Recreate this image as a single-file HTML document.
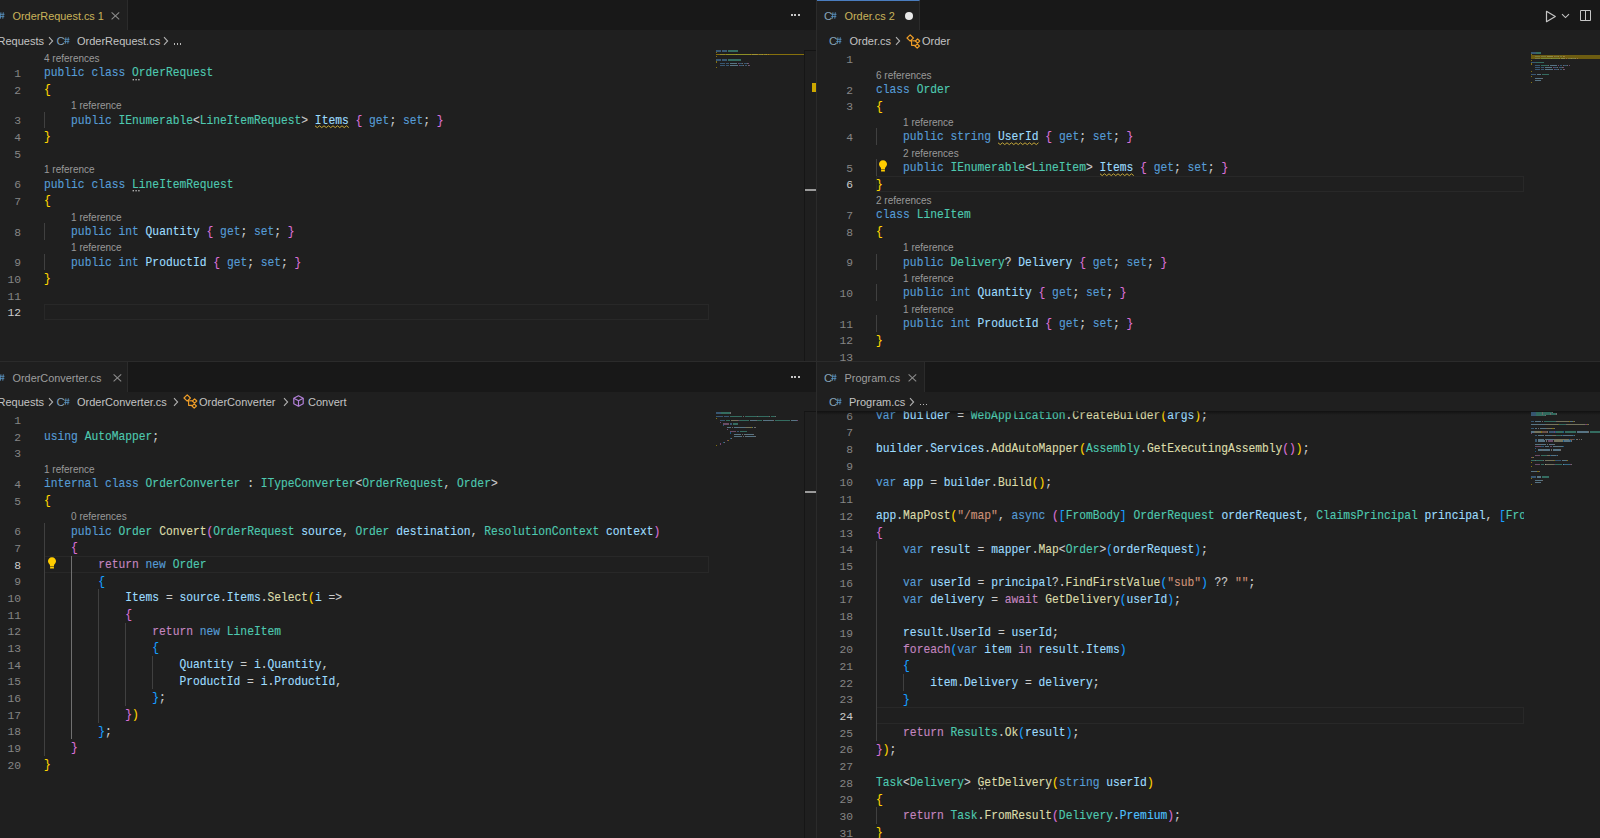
<!DOCTYPE html><html><head><meta charset="utf-8"><style>
*{margin:0;padding:0;box-sizing:border-box}
html,body{width:1600px;height:838px;overflow:hidden;background:#1f1f1f}
body{position:relative;font-family:"Liberation Sans",sans-serif}
.abs{position:absolute}
.lens{position:absolute;height:14px;line-height:14px;font-size:10px;color:#999999;white-space:pre;padding-top:1.6px}
.code{position:absolute;height:16.68px;line-height:16.68px;font-size:11.29px;white-space:pre;font-family:"Liberation Mono",monospace;color:#CCCCCC;padding-top:0.9px;transform:scaleY(1.07);transform-origin:0 12.2px;-webkit-text-stroke:0.12px}
.ln{position:absolute;width:40px;text-align:right;height:16.68px;line-height:16.68px;font-size:11.29px;font-family:"Liberation Mono",monospace;padding-top:1.7px}
.cur{position:absolute;height:16.68px;border:1px solid #282828}
.ig{position:absolute;width:1px;height:16.68px;background:#404040}
.ig.act{background:#707070}
.mm{position:absolute;height:1.2px;opacity:0.45}
.tabtxt{position:absolute;height:30px;line-height:30px;font-size:10.9px;white-space:pre}
.bct{position:absolute;height:20px;line-height:20px;white-space:pre}
.csic{position:absolute;font-size:11.5px;line-height:14px;height:14px;color:#86A2B8;white-space:pre}
.hash{font-size:8px;position:relative;top:-1px}
</style></head><body>
<div class="abs" style="left:0px;top:0px;width:816px;height:30px;background:#181818;"></div>
<div class="abs" style="left:0px;top:0px;width:128px;height:30px;background:#1f1f1f;border-right:1px solid #2b2b2b"></div>
<div class="csic" style="left:-7.9px;top:8.5px">C</div><svg class="abs" style="left:-0.9px;top:11.9px" width="6" height="7" viewBox="0 0 6 7"><path d="M1.9 0.3L1.4 6.7M4.3 0.3L3.8 6.7M0.3 2.3H5.5M0.1 4.6H5.3" stroke="#5A93C2" stroke-width="0.85"/></svg>
<div class="tabtxt" style="left:12.5px;top:0.7px;color:#C9B35A">OrderRequest.cs 1</div>
<svg class="abs" style="left:110.5px;top:12px" width="9" height="8" viewBox="0 0 9 8"><path d="M0.6 0.4L8.2 7.4M8.2 0.4L0.6 7.4" stroke="#8C8C8C" stroke-width="1.05"/></svg>
<div class="abs" style="left:0px;top:30px;width:816px;height:20px;background:#1f1f1f"></div>
<div class="bct" style="left:-2.5px;top:31px;color:#C3C3C3;font-size:11px">Requests</div><svg class="abs" style="left:47.5px;top:36px" width="6" height="10" viewBox="0 0 6 10"><path d="M1 1.2L4.6 5L1 8.8" fill="none" stroke="#B0B0B0" stroke-width="1.1"/></svg><div class="csic" style="left:56.6px;top:34px">C</div><svg class="abs" style="left:63.6px;top:37.4px" width="6" height="7" viewBox="0 0 6 7"><path d="M1.9 0.3L1.4 6.7M4.3 0.3L3.8 6.7M0.3 2.3H5.5M0.1 4.6H5.3" stroke="#5A93C2" stroke-width="0.85"/></svg><div class="bct" style="left:77px;top:31px;color:#C3C3C3;font-size:11px">OrderRequest.cs</div><svg class="abs" style="left:163px;top:36px" width="6" height="10" viewBox="0 0 6 10"><path d="M1 1.2L4.6 5L1 8.8" fill="none" stroke="#B0B0B0" stroke-width="1.1"/></svg><div class="abs" style="left:173.5px;top:43px;width:1.5px;height:1.5px;background:#B8B8B8"></div><div class="abs" style="left:176.5px;top:43px;width:1.5px;height:1.5px;background:#B8B8B8"></div><div class="abs" style="left:179.5px;top:43px;width:1.5px;height:1.5px;background:#B8B8B8"></div>
<div class="abs" style="left:790.5px;top:14.3px;width:2px;height:2px;background:#C5C5C5"></div><div class="abs" style="left:794.1px;top:14.3px;width:2px;height:2px;background:#C5C5C5"></div><div class="abs" style="left:797.7px;top:14.3px;width:2px;height:2px;background:#C5C5C5"></div>
<div style="position:absolute;left:0px;top:50.3px;width:816px;height:310.7px;overflow:hidden">
<div class="cur" style="left:44px;top:253.48px;width:665px"></div>
<div class="ig" style="left:44px;top:61.36px"></div>
<div class="ig" style="left:44px;top:172.76px"></div>
<div class="ig" style="left:44px;top:203.44px"></div>
<div class="lens" style="left:44px;top:-0px">4 references</div><div class="lens" style="left:71.09px;top:47.36px">1 reference</div><div class="lens" style="left:44px;top:111.4px">1 reference</div><div class="lens" style="left:71.09px;top:158.76px">1 reference</div><div class="lens" style="left:71.09px;top:189.44px">1 reference</div>
<div class="ln" style="left:-19px;top:14px;color:#858585">1</div>
<div class="code" style="left:44px;top:14px"><span style="color:#569CD6">public</span> <span style="color:#569CD6">class</span> <span style="color:#4EC9B0">OrderRequest</span></div>
<div class="ln" style="left:-19px;top:30.68px;color:#858585">2</div>
<div class="code" style="left:44px;top:30.68px"><span style="color:#FFD700">{</span></div>
<div class="ln" style="left:-19px;top:61.36px;color:#858585">3</div>
<div class="code" style="left:44px;top:61.36px">    <span style="color:#569CD6">public</span> <span style="color:#4EC9B0">IEnumerable</span>&lt;<span style="color:#4EC9B0">LineItemRequest</span>&gt; <span style="color:#9CDCFE">Items</span> <span style="color:#DA70D6">{</span> <span style="color:#569CD6">get</span>; <span style="color:#569CD6">set</span>; <span style="color:#DA70D6">}</span></div>
<div class="ln" style="left:-19px;top:78.04px;color:#858585">4</div>
<div class="code" style="left:44px;top:78.04px"><span style="color:#FFD700">}</span></div>
<div class="ln" style="left:-19px;top:94.72px;color:#858585">5</div>
<div class="code" style="left:44px;top:94.72px"></div>
<div class="ln" style="left:-19px;top:125.4px;color:#858585">6</div>
<div class="code" style="left:44px;top:125.4px"><span style="color:#569CD6">public</span> <span style="color:#569CD6">class</span> <span style="color:#4EC9B0">LineItemRequest</span></div>
<div class="ln" style="left:-19px;top:142.08px;color:#858585">7</div>
<div class="code" style="left:44px;top:142.08px"><span style="color:#FFD700">{</span></div>
<div class="ln" style="left:-19px;top:172.76px;color:#858585">8</div>
<div class="code" style="left:44px;top:172.76px">    <span style="color:#569CD6">public</span> <span style="color:#569CD6">int</span> <span style="color:#9CDCFE">Quantity</span> <span style="color:#DA70D6">{</span> <span style="color:#569CD6">get</span>; <span style="color:#569CD6">set</span>; <span style="color:#DA70D6">}</span></div>
<div class="ln" style="left:-19px;top:203.44px;color:#858585">9</div>
<div class="code" style="left:44px;top:203.44px">    <span style="color:#569CD6">public</span> <span style="color:#569CD6">int</span> <span style="color:#9CDCFE">ProductId</span> <span style="color:#DA70D6">{</span> <span style="color:#569CD6">get</span>; <span style="color:#569CD6">set</span>; <span style="color:#DA70D6">}</span></div>
<div class="ln" style="left:-19px;top:220.12px;color:#858585">10</div>
<div class="code" style="left:44px;top:220.12px"><span style="color:#FFD700">}</span></div>
<div class="ln" style="left:-19px;top:236.8px;color:#858585">11</div>
<div class="code" style="left:44px;top:236.8px"></div>
<div class="ln" style="left:-19px;top:253.48px;color:#CCCCCC">12</div>
<div class="code" style="left:44px;top:253.48px"></div>
<svg class="abs" style="left:314.92px;top:74.96px" width="34.86" height="4"><polyline points="0,0.8 2.25,2.6 4.5,0.8 6.75,2.6 9,0.8 11.25,2.6 13.5,0.8 15.75,2.6 18,0.8 20.25,2.6 22.5,0.8 24.75,2.6 27,0.8 29.25,2.6 31.5,0.8 33.75,2.6" fill="none" stroke="#C4A73A" stroke-width="1"/></svg>
<svg class="abs" style="left:132.05px;top:28.4px" width="9" height="2"><rect x="0.6" y="0" width="1.4" height="1.4" fill="#B0B0B0"/><rect x="3.4" y="0" width="1.4" height="1.4" fill="#B0B0B0"/><rect x="6.2" y="0" width="1.4" height="1.4" fill="#B0B0B0"/></svg>
<svg class="abs" style="left:132.05px;top:139.8px" width="9" height="2"><rect x="0.6" y="0" width="1.4" height="1.4" fill="#B0B0B0"/><rect x="3.4" y="0" width="1.4" height="1.4" fill="#B0B0B0"/><rect x="6.2" y="0" width="1.4" height="1.4" fill="#B0B0B0"/></svg>
<div class="mm" style="left:716px;top:0.1px;width:5.4px;background:#569CD6"></div>
<div class="mm" style="left:722.3px;top:0.1px;width:4.5px;background:#569CD6"></div>
<div class="mm" style="left:727.7px;top:0.1px;width:10.8px;background:#4EC9B0"></div>
<div class="mm" style="left:716px;top:1.92px;width:0.9px;background:#FFD700"></div>
<div class="mm" style="left:719.6px;top:3.74px;width:5.4px;background:#569CD6"></div>
<div class="mm" style="left:725.9px;top:3.74px;width:9.9px;background:#4EC9B0"></div>
<div class="mm" style="left:735.8px;top:3.74px;width:0.9px;background:#CCCCCC"></div>
<div class="mm" style="left:736.7px;top:3.74px;width:13.5px;background:#4EC9B0"></div>
<div class="mm" style="left:750.2px;top:3.74px;width:0.9px;background:#CCCCCC"></div>
<div class="mm" style="left:752px;top:3.74px;width:4.5px;background:#9CDCFE"></div>
<div class="mm" style="left:757.4px;top:3.74px;width:0.9px;background:#DA70D6"></div>
<div class="mm" style="left:759.2px;top:3.74px;width:2.7px;background:#569CD6"></div>
<div class="mm" style="left:761.9px;top:3.74px;width:0.9px;background:#CCCCCC"></div>
<div class="mm" style="left:763.7px;top:3.74px;width:2.7px;background:#569CD6"></div>
<div class="mm" style="left:766.4px;top:3.74px;width:0.9px;background:#CCCCCC"></div>
<div class="mm" style="left:768.2px;top:3.74px;width:0.9px;background:#DA70D6"></div>
<div class="mm" style="left:716px;top:5.56px;width:0.9px;background:#FFD700"></div>
<div class="mm" style="left:716px;top:9.2px;width:5.4px;background:#569CD6"></div>
<div class="mm" style="left:722.3px;top:9.2px;width:4.5px;background:#569CD6"></div>
<div class="mm" style="left:727.7px;top:9.2px;width:13.5px;background:#4EC9B0"></div>
<div class="mm" style="left:716px;top:11.02px;width:0.9px;background:#FFD700"></div>
<div class="mm" style="left:719.6px;top:12.84px;width:5.4px;background:#569CD6"></div>
<div class="mm" style="left:725.9px;top:12.84px;width:2.7px;background:#569CD6"></div>
<div class="mm" style="left:729.5px;top:12.84px;width:7.2px;background:#9CDCFE"></div>
<div class="mm" style="left:737.6px;top:12.84px;width:0.9px;background:#DA70D6"></div>
<div class="mm" style="left:739.4px;top:12.84px;width:2.7px;background:#569CD6"></div>
<div class="mm" style="left:742.1px;top:12.84px;width:0.9px;background:#CCCCCC"></div>
<div class="mm" style="left:743.9px;top:12.84px;width:2.7px;background:#569CD6"></div>
<div class="mm" style="left:746.6px;top:12.84px;width:0.9px;background:#CCCCCC"></div>
<div class="mm" style="left:748.4px;top:12.84px;width:0.9px;background:#DA70D6"></div>
<div class="mm" style="left:719.6px;top:14.66px;width:5.4px;background:#569CD6"></div>
<div class="mm" style="left:725.9px;top:14.66px;width:2.7px;background:#569CD6"></div>
<div class="mm" style="left:729.5px;top:14.66px;width:8.1px;background:#9CDCFE"></div>
<div class="mm" style="left:738.5px;top:14.66px;width:0.9px;background:#DA70D6"></div>
<div class="mm" style="left:740.3px;top:14.66px;width:2.7px;background:#569CD6"></div>
<div class="mm" style="left:743px;top:14.66px;width:0.9px;background:#CCCCCC"></div>
<div class="mm" style="left:744.8px;top:14.66px;width:2.7px;background:#569CD6"></div>
<div class="mm" style="left:747.5px;top:14.66px;width:0.9px;background:#CCCCCC"></div>
<div class="mm" style="left:749.3px;top:14.66px;width:0.9px;background:#DA70D6"></div>
<div class="mm" style="left:716px;top:16.48px;width:0.9px;background:#FFD700"></div>
</div>
<div class="abs" style="left:817px;top:0px;width:783px;height:30px;background:#181818;"></div>
<div class="abs" style="left:817px;top:0px;width:103px;height:30px;background:#1f1f1f;border-right:1px solid #2b2b2b;border-top:1px solid #4A7DBF"></div>
<div class="csic" style="left:824.1px;top:8.5px">C</div><svg class="abs" style="left:831.1px;top:11.9px" width="6" height="7" viewBox="0 0 6 7"><path d="M1.9 0.3L1.4 6.7M4.3 0.3L3.8 6.7M0.3 2.3H5.5M0.1 4.6H5.3" stroke="#5A93C2" stroke-width="0.85"/></svg>
<div class="tabtxt" style="left:844.5px;top:0.7px;color:#C9B35A">Order.cs 2</div>
<div class="abs" style="left:904.5px;top:11.5px;width:8px;height:8px;border-radius:50%;background:#E8E8E8"></div>
<div class="abs" style="left:817px;top:30px;width:783px;height:20px;background:#1f1f1f"></div>
<div class="csic" style="left:829.1px;top:34px">C</div><svg class="abs" style="left:836.1px;top:37.4px" width="6" height="7" viewBox="0 0 6 7"><path d="M1.9 0.3L1.4 6.7M4.3 0.3L3.8 6.7M0.3 2.3H5.5M0.1 4.6H5.3" stroke="#5A93C2" stroke-width="0.85"/></svg><div class="bct" style="left:849.5px;top:31px;color:#C3C3C3;font-size:11px">Order.cs</div><svg class="abs" style="left:895px;top:36px" width="6" height="10" viewBox="0 0 6 10"><path d="M1 1.2L4.6 5L1 8.8" fill="none" stroke="#B0B0B0" stroke-width="1.1"/></svg><svg class="abs" style="left:905.5px;top:33.6px" width="15" height="15" viewBox="0 0 15 15"><g fill="none" stroke="#EE9D28" stroke-width="1.15" stroke-linejoin="round"><path d="M1 4L4.2 0.8L7.4 4L4.2 7.2Z"/><path d="M5.6 6V11.3H9"/><path d="M6.3 6.8H9.4"/><path d="M9.4 7L11.6 4.8L13.8 7L11.6 9.2Z"/><path d="M9 12L11.2 9.8L13.4 12L11.2 14.2Z"/></g></svg><div class="bct" style="left:922px;top:31px;color:#C3C3C3;font-size:11px">Order</div>
<svg class="abs" style="left:1545px;top:10px" width="12" height="13" viewBox="0 0 12 13"><path d="M1.5 1.3L10.3 6.5L1.5 11.7Z" fill="none" stroke="#C5C5C5" stroke-width="1.2" stroke-linejoin="round"/></svg><svg class="abs" style="left:1561px;top:13px" width="9" height="6" viewBox="0 0 9 6"><path d="M1 1.2L4.5 4.6L8 1.2" fill="none" stroke="#C5C5C5" stroke-width="1.1"/></svg><svg class="abs" style="left:1580px;top:10px" width="12" height="12" viewBox="0 0 12 12"><path d="M0.5 0.5H10.5V10.5H0.5Z M5.5 0.5V10.5" fill="none" stroke="#C5C5C5" stroke-width="1"/></svg>
<div style="position:absolute;left:817px;top:50.3px;width:783px;height:310.7px;overflow:hidden">
<div class="cur" style="left:59px;top:125.4px;width:648px"></div>
<div class="ig" style="left:59px;top:78.04px"></div>
<div class="ig" style="left:59px;top:108.72px"></div>
<div class="ig" style="left:59px;top:203.44px"></div>
<div class="ig" style="left:59px;top:234.12px"></div>
<div class="ig" style="left:59px;top:264.8px"></div>
<div class="lens" style="left:59px;top:16.68px">6 references</div><div class="lens" style="left:86.09px;top:64.04px">1 reference</div><div class="lens" style="left:86.09px;top:94.72px">2 references</div><div class="lens" style="left:59px;top:142.08px">2 references</div><div class="lens" style="left:86.09px;top:189.44px">1 reference</div><div class="lens" style="left:86.09px;top:220.12px">1 reference</div><div class="lens" style="left:86.09px;top:250.8px">1 reference</div>
<div class="ln" style="left:-4px;top:-0px;color:#858585">1</div>
<div class="code" style="left:59px;top:-0px"></div>
<div class="ln" style="left:-4px;top:30.68px;color:#858585">2</div>
<div class="code" style="left:59px;top:30.68px"><span style="color:#569CD6">class</span> <span style="color:#4EC9B0">Order</span></div>
<div class="ln" style="left:-4px;top:47.36px;color:#858585">3</div>
<div class="code" style="left:59px;top:47.36px"><span style="color:#FFD700">{</span></div>
<div class="ln" style="left:-4px;top:78.04px;color:#858585">4</div>
<div class="code" style="left:59px;top:78.04px">    <span style="color:#569CD6">public</span> <span style="color:#569CD6">string</span> <span style="color:#9CDCFE">UserId</span> <span style="color:#DA70D6">{</span> <span style="color:#569CD6">get</span>; <span style="color:#569CD6">set</span>; <span style="color:#DA70D6">}</span></div>
<div class="ln" style="left:-4px;top:108.72px;color:#858585">5</div>
<div class="code" style="left:59px;top:108.72px">    <span style="color:#569CD6">public</span> <span style="color:#4EC9B0">IEnumerable</span>&lt;<span style="color:#4EC9B0">LineItem</span>&gt; <span style="color:#9CDCFE">Items</span> <span style="color:#DA70D6">{</span> <span style="color:#569CD6">get</span>; <span style="color:#569CD6">set</span>; <span style="color:#DA70D6">}</span></div>
<div class="ln" style="left:-4px;top:125.4px;color:#CCCCCC">6</div>
<div class="code" style="left:59px;top:125.4px"><span style="color:#FFD700">}</span></div>
<div class="ln" style="left:-4px;top:156.08px;color:#858585">7</div>
<div class="code" style="left:59px;top:156.08px"><span style="color:#569CD6">class</span> <span style="color:#4EC9B0">LineItem</span></div>
<div class="ln" style="left:-4px;top:172.76px;color:#858585">8</div>
<div class="code" style="left:59px;top:172.76px"><span style="color:#FFD700">{</span></div>
<div class="ln" style="left:-4px;top:203.44px;color:#858585">9</div>
<div class="code" style="left:59px;top:203.44px">    <span style="color:#569CD6">public</span> <span style="color:#4EC9B0">Delivery</span>? <span style="color:#9CDCFE">Delivery</span> <span style="color:#DA70D6">{</span> <span style="color:#569CD6">get</span>; <span style="color:#569CD6">set</span>; <span style="color:#DA70D6">}</span></div>
<div class="ln" style="left:-4px;top:234.12px;color:#858585">10</div>
<div class="code" style="left:59px;top:234.12px">    <span style="color:#569CD6">public</span> <span style="color:#569CD6">int</span> <span style="color:#9CDCFE">Quantity</span> <span style="color:#DA70D6">{</span> <span style="color:#569CD6">get</span>; <span style="color:#569CD6">set</span>; <span style="color:#DA70D6">}</span></div>
<div class="ln" style="left:-4px;top:264.8px;color:#858585">11</div>
<div class="code" style="left:59px;top:264.8px">    <span style="color:#569CD6">public</span> <span style="color:#569CD6">int</span> <span style="color:#9CDCFE">ProductId</span> <span style="color:#DA70D6">{</span> <span style="color:#569CD6">get</span>; <span style="color:#569CD6">set</span>; <span style="color:#DA70D6">}</span></div>
<div class="ln" style="left:-4px;top:281.48px;color:#858585">12</div>
<div class="code" style="left:59px;top:281.48px"><span style="color:#FFD700">}</span></div>
<div class="ln" style="left:-4px;top:298.16px;color:#858585">13</div>
<div class="code" style="left:59px;top:298.16px"></div>
<svg class="abs" style="left:180.91px;top:91.64px" width="41.64" height="4"><polyline points="0,0.8 2.25,2.6 4.5,0.8 6.75,2.6 9,0.8 11.25,2.6 13.5,0.8 15.75,2.6 18,0.8 20.25,2.6 22.5,0.8 24.75,2.6 27,0.8 29.25,2.6 31.5,0.8 33.75,2.6 36,0.8 38.25,2.6 40.5,0.8" fill="none" stroke="#C4A73A" stroke-width="1"/></svg>
<svg class="abs" style="left:282.51px;top:122.32px" width="34.86" height="4"><polyline points="0,0.8 2.25,2.6 4.5,0.8 6.75,2.6 9,0.8 11.25,2.6 13.5,0.8 15.75,2.6 18,0.8 20.25,2.6 22.5,0.8 24.75,2.6 27,0.8 29.25,2.6 31.5,0.8 33.75,2.6" fill="none" stroke="#C4A73A" stroke-width="1"/></svg>
<svg class="abs" style="left:60px;top:109.02px" width="12" height="14" viewBox="0 0 12 14"><path d="M6 1.2C3.6 1.2 2 3 2 5.1c0 1.4.7 2.3 1.3 3 .4.5.7.9.7 1.5V10.5h4V9.6c0-.6.3-1 .7-1.5.6-.7 1.3-1.6 1.3-3C10 3 8.4 1.2 6 1.2z" fill="#FFCC00"/><rect x="4" y="11" width="4" height="1.6" rx=".6" fill="#FFCC00"/></svg>
<div class="mm" style="left:714px;top:2.12px;width:4.5px;background:#569CD6"></div>
<div class="mm" style="left:719.4px;top:2.12px;width:4.5px;background:#4EC9B0"></div>
<div class="mm" style="left:714px;top:3.94px;width:0.9px;background:#FFD700"></div>
<div class="mm" style="left:717.6px;top:5.76px;width:5.4px;background:#569CD6"></div>
<div class="mm" style="left:723.9px;top:5.76px;width:5.4px;background:#569CD6"></div>
<div class="mm" style="left:730.2px;top:5.76px;width:5.4px;background:#9CDCFE"></div>
<div class="mm" style="left:736.5px;top:5.76px;width:0.9px;background:#DA70D6"></div>
<div class="mm" style="left:738.3px;top:5.76px;width:2.7px;background:#569CD6"></div>
<div class="mm" style="left:741px;top:5.76px;width:0.9px;background:#CCCCCC"></div>
<div class="mm" style="left:742.8px;top:5.76px;width:2.7px;background:#569CD6"></div>
<div class="mm" style="left:745.5px;top:5.76px;width:0.9px;background:#CCCCCC"></div>
<div class="mm" style="left:747.3px;top:5.76px;width:0.9px;background:#DA70D6"></div>
<div class="mm" style="left:717.6px;top:7.58px;width:5.4px;background:#569CD6"></div>
<div class="mm" style="left:723.9px;top:7.58px;width:9.9px;background:#4EC9B0"></div>
<div class="mm" style="left:733.8px;top:7.58px;width:0.9px;background:#CCCCCC"></div>
<div class="mm" style="left:734.7px;top:7.58px;width:7.2px;background:#4EC9B0"></div>
<div class="mm" style="left:741.9px;top:7.58px;width:0.9px;background:#CCCCCC"></div>
<div class="mm" style="left:743.7px;top:7.58px;width:4.5px;background:#9CDCFE"></div>
<div class="mm" style="left:749.1px;top:7.58px;width:0.9px;background:#DA70D6"></div>
<div class="mm" style="left:750.9px;top:7.58px;width:2.7px;background:#569CD6"></div>
<div class="mm" style="left:753.6px;top:7.58px;width:0.9px;background:#CCCCCC"></div>
<div class="mm" style="left:755.4px;top:7.58px;width:2.7px;background:#569CD6"></div>
<div class="mm" style="left:758.1px;top:7.58px;width:0.9px;background:#CCCCCC"></div>
<div class="mm" style="left:759.9px;top:7.58px;width:0.9px;background:#DA70D6"></div>
<div class="mm" style="left:714px;top:9.4px;width:0.9px;background:#FFD700"></div>
<div class="mm" style="left:714px;top:11.22px;width:4.5px;background:#569CD6"></div>
<div class="mm" style="left:719.4px;top:11.22px;width:7.2px;background:#4EC9B0"></div>
<div class="mm" style="left:714px;top:13.04px;width:0.9px;background:#FFD700"></div>
<div class="mm" style="left:717.6px;top:14.86px;width:5.4px;background:#569CD6"></div>
<div class="mm" style="left:723.9px;top:14.86px;width:7.2px;background:#4EC9B0"></div>
<div class="mm" style="left:731.1px;top:14.86px;width:0.9px;background:#CCCCCC"></div>
<div class="mm" style="left:732.9px;top:14.86px;width:7.2px;background:#9CDCFE"></div>
<div class="mm" style="left:741px;top:14.86px;width:0.9px;background:#DA70D6"></div>
<div class="mm" style="left:742.8px;top:14.86px;width:2.7px;background:#569CD6"></div>
<div class="mm" style="left:745.5px;top:14.86px;width:0.9px;background:#CCCCCC"></div>
<div class="mm" style="left:747.3px;top:14.86px;width:2.7px;background:#569CD6"></div>
<div class="mm" style="left:750px;top:14.86px;width:0.9px;background:#CCCCCC"></div>
<div class="mm" style="left:751.8px;top:14.86px;width:0.9px;background:#DA70D6"></div>
<div class="mm" style="left:717.6px;top:16.68px;width:5.4px;background:#569CD6"></div>
<div class="mm" style="left:723.9px;top:16.68px;width:2.7px;background:#569CD6"></div>
<div class="mm" style="left:727.5px;top:16.68px;width:7.2px;background:#9CDCFE"></div>
<div class="mm" style="left:735.6px;top:16.68px;width:0.9px;background:#DA70D6"></div>
<div class="mm" style="left:737.4px;top:16.68px;width:2.7px;background:#569CD6"></div>
<div class="mm" style="left:740.1px;top:16.68px;width:0.9px;background:#CCCCCC"></div>
<div class="mm" style="left:741.9px;top:16.68px;width:2.7px;background:#569CD6"></div>
<div class="mm" style="left:744.6px;top:16.68px;width:0.9px;background:#CCCCCC"></div>
<div class="mm" style="left:746.4px;top:16.68px;width:0.9px;background:#DA70D6"></div>
<div class="mm" style="left:717.6px;top:18.5px;width:5.4px;background:#569CD6"></div>
<div class="mm" style="left:723.9px;top:18.5px;width:2.7px;background:#569CD6"></div>
<div class="mm" style="left:727.5px;top:18.5px;width:8.1px;background:#9CDCFE"></div>
<div class="mm" style="left:736.5px;top:18.5px;width:0.9px;background:#DA70D6"></div>
<div class="mm" style="left:738.3px;top:18.5px;width:2.7px;background:#569CD6"></div>
<div class="mm" style="left:741px;top:18.5px;width:0.9px;background:#CCCCCC"></div>
<div class="mm" style="left:742.8px;top:18.5px;width:2.7px;background:#569CD6"></div>
<div class="mm" style="left:745.5px;top:18.5px;width:0.9px;background:#CCCCCC"></div>
<div class="mm" style="left:747.3px;top:18.5px;width:0.9px;background:#DA70D6"></div>
<div class="mm" style="left:714px;top:20.32px;width:0.9px;background:#FFD700"></div>
<div class="mm" style="left:714px;top:23.96px;width:5.4px;background:#569CD6"></div>
<div class="mm" style="left:720.3px;top:23.96px;width:3.6px;background:#9CDCFE"></div>
<div class="mm" style="left:724.8px;top:23.96px;width:7.2px;background:#4EC9B0"></div>
<div class="mm" style="left:714px;top:25.78px;width:0.9px;background:#FFD700"></div>
<div class="mm" style="left:717.6px;top:27.6px;width:7.2px;background:#9CDCFE"></div>
<div class="mm" style="left:724.8px;top:27.6px;width:0.9px;background:#CCCCCC"></div>
<div class="mm" style="left:717.6px;top:29.42px;width:6.3px;background:#9CDCFE"></div>
<div class="mm" style="left:714px;top:31.24px;width:0.9px;background:#FFD700"></div>
</div>
<div class="abs" style="left:0;top:361px;width:1600px;height:1px;background:#2b2b2b"></div>
<div class="abs" style="left:816px;top:0;width:1px;height:838px;background:#2b2b2b"></div>
<div class="abs" style="left:0px;top:362px;width:816px;height:30px;background:#181818;"></div>
<div class="abs" style="left:0px;top:362px;width:128px;height:30px;background:#1f1f1f;border-right:1px solid #2b2b2b"></div>
<div class="csic" style="left:-7.9px;top:370.5px">C</div><svg class="abs" style="left:-0.9px;top:373.9px" width="6" height="7" viewBox="0 0 6 7"><path d="M1.9 0.3L1.4 6.7M4.3 0.3L3.8 6.7M0.3 2.3H5.5M0.1 4.6H5.3" stroke="#5A93C2" stroke-width="0.85"/></svg>
<div class="tabtxt" style="left:12.5px;top:362.7px;color:#9D9D9D">OrderConverter.cs</div>
<svg class="abs" style="left:112.5px;top:374px" width="9" height="8" viewBox="0 0 9 8"><path d="M0.6 0.4L8.2 7.4M8.2 0.4L0.6 7.4" stroke="#8C8C8C" stroke-width="1.05"/></svg>
<div class="abs" style="left:0px;top:392px;width:816px;height:20px;background:#1f1f1f"></div>
<div class="bct" style="left:-2.5px;top:391.5px;color:#C3C3C3;font-size:11px">Requests</div><svg class="abs" style="left:47.5px;top:396.5px" width="6" height="10" viewBox="0 0 6 10"><path d="M1 1.2L4.6 5L1 8.8" fill="none" stroke="#B0B0B0" stroke-width="1.1"/></svg><div class="csic" style="left:56.6px;top:394.5px">C</div><svg class="abs" style="left:63.6px;top:397.9px" width="6" height="7" viewBox="0 0 6 7"><path d="M1.9 0.3L1.4 6.7M4.3 0.3L3.8 6.7M0.3 2.3H5.5M0.1 4.6H5.3" stroke="#5A93C2" stroke-width="0.85"/></svg><div class="bct" style="left:77px;top:391.5px;color:#C3C3C3;font-size:11px">OrderConverter.cs</div><svg class="abs" style="left:173px;top:396.5px" width="6" height="10" viewBox="0 0 6 10"><path d="M1 1.2L4.6 5L1 8.8" fill="none" stroke="#B0B0B0" stroke-width="1.1"/></svg><svg class="abs" style="left:183px;top:394.1px" width="15" height="15" viewBox="0 0 15 15"><g fill="none" stroke="#EE9D28" stroke-width="1.15" stroke-linejoin="round"><path d="M1 4L4.2 0.8L7.4 4L4.2 7.2Z"/><path d="M5.6 6V11.3H9"/><path d="M6.3 6.8H9.4"/><path d="M9.4 7L11.6 4.8L13.8 7L11.6 9.2Z"/><path d="M9 12L11.2 9.8L13.4 12L11.2 14.2Z"/></g></svg><div class="bct" style="left:199px;top:391.5px;color:#C3C3C3;font-size:11px">OrderConverter</div><svg class="abs" style="left:283px;top:396.5px" width="6" height="10" viewBox="0 0 6 10"><path d="M1 1.2L4.6 5L1 8.8" fill="none" stroke="#B0B0B0" stroke-width="1.1"/></svg><svg class="abs" style="left:292.5px;top:394.7px" width="11" height="12" viewBox="0 0 11 12"><g fill="none" stroke="#B180D7" stroke-width="1.2" stroke-linejoin="round"><path d="M5.5 0.8L10.2 3.3V8.7L5.5 11.2L0.8 8.7V3.3Z"/><path d="M0.8 3.3L5.5 5.8L10.2 3.3M5.5 5.8V11.2"/></g></svg><div class="bct" style="left:308px;top:391.5px;color:#C3C3C3;font-size:11px">Convert</div>
<div class="abs" style="left:790.5px;top:375.6px;width:2px;height:2px;background:#C5C5C5"></div><div class="abs" style="left:794.1px;top:375.6px;width:2px;height:2px;background:#C5C5C5"></div><div class="abs" style="left:797.7px;top:375.6px;width:2px;height:2px;background:#C5C5C5"></div>
<div style="position:absolute;left:0px;top:411.2px;width:816px;height:426.8px;overflow:hidden">
<div class="cur" style="left:44px;top:144.76px;width:665px"></div>
<div class="ig" style="left:44px;top:111.4px"></div>
<div class="ig" style="left:44px;top:128.08px"></div>
<div class="ig" style="left:44px;top:144.76px"></div>
<div class="ig" style="left:44px;top:161.44px"></div>
<div class="ig" style="left:44px;top:178.12px"></div>
<div class="ig" style="left:44px;top:194.8px"></div>
<div class="ig" style="left:44px;top:211.48px"></div>
<div class="ig" style="left:44px;top:228.16px"></div>
<div class="ig" style="left:44px;top:244.84px"></div>
<div class="ig" style="left:44px;top:261.52px"></div>
<div class="ig" style="left:44px;top:278.2px"></div>
<div class="ig" style="left:44px;top:294.88px"></div>
<div class="ig" style="left:44px;top:311.56px"></div>
<div class="ig" style="left:44px;top:328.24px"></div>
<div class="ig act" style="left:71.09px;top:144.76px"></div>
<div class="ig act" style="left:71.09px;top:161.44px"></div>
<div class="ig act" style="left:71.09px;top:178.12px"></div>
<div class="ig act" style="left:71.09px;top:194.8px"></div>
<div class="ig act" style="left:71.09px;top:211.48px"></div>
<div class="ig act" style="left:71.09px;top:228.16px"></div>
<div class="ig act" style="left:71.09px;top:244.84px"></div>
<div class="ig act" style="left:71.09px;top:261.52px"></div>
<div class="ig act" style="left:71.09px;top:278.2px"></div>
<div class="ig act" style="left:71.09px;top:294.88px"></div>
<div class="ig act" style="left:71.09px;top:311.56px"></div>
<div class="ig" style="left:98.18px;top:178.12px"></div>
<div class="ig" style="left:98.18px;top:194.8px"></div>
<div class="ig" style="left:98.18px;top:211.48px"></div>
<div class="ig" style="left:98.18px;top:228.16px"></div>
<div class="ig" style="left:98.18px;top:244.84px"></div>
<div class="ig" style="left:98.18px;top:261.52px"></div>
<div class="ig" style="left:98.18px;top:278.2px"></div>
<div class="ig" style="left:98.18px;top:294.88px"></div>
<div class="ig" style="left:125.28px;top:211.48px"></div>
<div class="ig" style="left:125.28px;top:228.16px"></div>
<div class="ig" style="left:125.28px;top:244.84px"></div>
<div class="ig" style="left:125.28px;top:261.52px"></div>
<div class="ig" style="left:125.28px;top:278.2px"></div>
<div class="ig" style="left:152.37px;top:244.84px"></div>
<div class="ig" style="left:152.37px;top:261.52px"></div>
<div class="lens" style="left:44px;top:50.04px">1 reference</div><div class="lens" style="left:71.09px;top:97.4px">0 references</div>
<div class="ln" style="left:-19px;top:-0px;color:#858585">1</div>
<div class="code" style="left:44px;top:-0px"></div>
<div class="ln" style="left:-19px;top:16.68px;color:#858585">2</div>
<div class="code" style="left:44px;top:16.68px"><span style="color:#569CD6">using</span> <span style="color:#4EC9B0">AutoMapper</span>;</div>
<div class="ln" style="left:-19px;top:33.36px;color:#858585">3</div>
<div class="code" style="left:44px;top:33.36px"></div>
<div class="ln" style="left:-19px;top:64.04px;color:#858585">4</div>
<div class="code" style="left:44px;top:64.04px"><span style="color:#569CD6">internal</span> <span style="color:#569CD6">class</span> <span style="color:#4EC9B0">OrderConverter</span> : <span style="color:#4EC9B0">ITypeConverter</span>&lt;<span style="color:#4EC9B0">OrderRequest</span>, <span style="color:#4EC9B0">Order</span>&gt;</div>
<div class="ln" style="left:-19px;top:80.72px;color:#858585">5</div>
<div class="code" style="left:44px;top:80.72px"><span style="color:#FFD700">{</span></div>
<div class="ln" style="left:-19px;top:111.4px;color:#858585">6</div>
<div class="code" style="left:44px;top:111.4px">    <span style="color:#569CD6">public</span> <span style="color:#4EC9B0">Order</span> <span style="color:#DCDCAA">Convert</span><span style="color:#DA70D6">(</span><span style="color:#4EC9B0">OrderRequest</span> <span style="color:#9CDCFE">source</span>, <span style="color:#4EC9B0">Order</span> <span style="color:#9CDCFE">destination</span>, <span style="color:#4EC9B0">ResolutionContext</span> <span style="color:#9CDCFE">context</span><span style="color:#DA70D6">)</span></div>
<div class="ln" style="left:-19px;top:128.08px;color:#858585">7</div>
<div class="code" style="left:44px;top:128.08px">    <span style="color:#DA70D6">{</span></div>
<div class="ln" style="left:-19px;top:144.76px;color:#CCCCCC">8</div>
<div class="code" style="left:44px;top:144.76px">        <span style="color:#C586C0">return</span> <span style="color:#569CD6">new</span> <span style="color:#4EC9B0">Order</span></div>
<div class="ln" style="left:-19px;top:161.44px;color:#858585">9</div>
<div class="code" style="left:44px;top:161.44px">        <span style="color:#179FFF">{</span></div>
<div class="ln" style="left:-19px;top:178.12px;color:#858585">10</div>
<div class="code" style="left:44px;top:178.12px">            <span style="color:#9CDCFE">Items</span> = <span style="color:#9CDCFE">source</span>.<span style="color:#9CDCFE">Items</span>.<span style="color:#DCDCAA">Select</span><span style="color:#FFD700">(</span><span style="color:#9CDCFE">i</span> =&gt;</div>
<div class="ln" style="left:-19px;top:194.8px;color:#858585">11</div>
<div class="code" style="left:44px;top:194.8px">            <span style="color:#DA70D6">{</span></div>
<div class="ln" style="left:-19px;top:211.48px;color:#858585">12</div>
<div class="code" style="left:44px;top:211.48px">                <span style="color:#C586C0">return</span> <span style="color:#569CD6">new</span> <span style="color:#4EC9B0">LineItem</span></div>
<div class="ln" style="left:-19px;top:228.16px;color:#858585">13</div>
<div class="code" style="left:44px;top:228.16px">                <span style="color:#179FFF">{</span></div>
<div class="ln" style="left:-19px;top:244.84px;color:#858585">14</div>
<div class="code" style="left:44px;top:244.84px">                    <span style="color:#9CDCFE">Quantity</span> = <span style="color:#9CDCFE">i</span>.<span style="color:#9CDCFE">Quantity</span>,</div>
<div class="ln" style="left:-19px;top:261.52px;color:#858585">15</div>
<div class="code" style="left:44px;top:261.52px">                    <span style="color:#9CDCFE">ProductId</span> = <span style="color:#9CDCFE">i</span>.<span style="color:#9CDCFE">ProductId</span>,</div>
<div class="ln" style="left:-19px;top:278.2px;color:#858585">16</div>
<div class="code" style="left:44px;top:278.2px">                <span style="color:#179FFF">}</span>;</div>
<div class="ln" style="left:-19px;top:294.88px;color:#858585">17</div>
<div class="code" style="left:44px;top:294.88px">            <span style="color:#DA70D6">}</span><span style="color:#FFD700">)</span></div>
<div class="ln" style="left:-19px;top:311.56px;color:#858585">18</div>
<div class="code" style="left:44px;top:311.56px">        <span style="color:#179FFF">}</span>;</div>
<div class="ln" style="left:-19px;top:328.24px;color:#858585">19</div>
<div class="code" style="left:44px;top:328.24px">    <span style="color:#DA70D6">}</span></div>
<div class="ln" style="left:-19px;top:344.92px;color:#858585">20</div>
<div class="code" style="left:44px;top:344.92px"><span style="color:#FFD700">}</span></div>
<svg class="abs" style="left:46px;top:145.06px" width="12" height="14" viewBox="0 0 12 14"><path d="M6 1.2C3.6 1.2 2 3 2 5.1c0 1.4.7 2.3 1.3 3 .4.5.7.9.7 1.5V10.5h4V9.6c0-.6.3-1 .7-1.5.6-.7 1.3-1.6 1.3-3C10 3 8.4 1.2 6 1.2z" fill="#FFCC00"/><rect x="4" y="11" width="4" height="1.6" rx=".6" fill="#FFCC00"/></svg>
<div class="mm" style="left:716px;top:1.22px;width:4.5px;background:#569CD6"></div>
<div class="mm" style="left:721.4px;top:1.22px;width:9px;background:#4EC9B0"></div>
<div class="mm" style="left:730.4px;top:1.22px;width:0.9px;background:#CCCCCC"></div>
<div class="mm" style="left:716px;top:4.86px;width:7.2px;background:#569CD6"></div>
<div class="mm" style="left:724.1px;top:4.86px;width:4.5px;background:#569CD6"></div>
<div class="mm" style="left:729.5px;top:4.86px;width:12.6px;background:#4EC9B0"></div>
<div class="mm" style="left:743px;top:4.86px;width:0.9px;background:#CCCCCC"></div>
<div class="mm" style="left:744.8px;top:4.86px;width:12.6px;background:#4EC9B0"></div>
<div class="mm" style="left:757.4px;top:4.86px;width:0.9px;background:#CCCCCC"></div>
<div class="mm" style="left:758.3px;top:4.86px;width:10.8px;background:#4EC9B0"></div>
<div class="mm" style="left:769.1px;top:4.86px;width:0.9px;background:#CCCCCC"></div>
<div class="mm" style="left:770.9px;top:4.86px;width:4.5px;background:#4EC9B0"></div>
<div class="mm" style="left:775.4px;top:4.86px;width:0.9px;background:#CCCCCC"></div>
<div class="mm" style="left:716px;top:6.68px;width:0.9px;background:#FFD700"></div>
<div class="mm" style="left:719.6px;top:8.5px;width:5.4px;background:#569CD6"></div>
<div class="mm" style="left:725.9px;top:8.5px;width:4.5px;background:#4EC9B0"></div>
<div class="mm" style="left:731.3px;top:8.5px;width:6.3px;background:#DCDCAA"></div>
<div class="mm" style="left:737.6px;top:8.5px;width:0.9px;background:#DA70D6"></div>
<div class="mm" style="left:738.5px;top:8.5px;width:10.8px;background:#4EC9B0"></div>
<div class="mm" style="left:750.2px;top:8.5px;width:5.4px;background:#9CDCFE"></div>
<div class="mm" style="left:755.6px;top:8.5px;width:0.9px;background:#CCCCCC"></div>
<div class="mm" style="left:757.4px;top:8.5px;width:4.5px;background:#4EC9B0"></div>
<div class="mm" style="left:762.8px;top:8.5px;width:9.9px;background:#9CDCFE"></div>
<div class="mm" style="left:772.7px;top:8.5px;width:0.9px;background:#CCCCCC"></div>
<div class="mm" style="left:774.5px;top:8.5px;width:15.3px;background:#4EC9B0"></div>
<div class="mm" style="left:790.7px;top:8.5px;width:6.3px;background:#9CDCFE"></div>
<div class="mm" style="left:797px;top:8.5px;width:0.9px;background:#DA70D6"></div>
<div class="mm" style="left:719.6px;top:10.32px;width:0.9px;background:#DA70D6"></div>
<div class="mm" style="left:723.2px;top:12.14px;width:5.4px;background:#C586C0"></div>
<div class="mm" style="left:729.5px;top:12.14px;width:2.7px;background:#569CD6"></div>
<div class="mm" style="left:733.1px;top:12.14px;width:4.5px;background:#4EC9B0"></div>
<div class="mm" style="left:723.2px;top:13.96px;width:0.9px;background:#179FFF"></div>
<div class="mm" style="left:726.8px;top:15.78px;width:4.5px;background:#9CDCFE"></div>
<div class="mm" style="left:732.2px;top:15.78px;width:0.9px;background:#CCCCCC"></div>
<div class="mm" style="left:734px;top:15.78px;width:5.4px;background:#9CDCFE"></div>
<div class="mm" style="left:739.4px;top:15.78px;width:0.9px;background:#CCCCCC"></div>
<div class="mm" style="left:740.3px;top:15.78px;width:4.5px;background:#9CDCFE"></div>
<div class="mm" style="left:744.8px;top:15.78px;width:0.9px;background:#CCCCCC"></div>
<div class="mm" style="left:745.7px;top:15.78px;width:5.4px;background:#DCDCAA"></div>
<div class="mm" style="left:751.1px;top:15.78px;width:0.9px;background:#FFD700"></div>
<div class="mm" style="left:752px;top:15.78px;width:0.9px;background:#9CDCFE"></div>
<div class="mm" style="left:753.8px;top:15.78px;width:1.8px;background:#CCCCCC"></div>
<div class="mm" style="left:726.8px;top:17.6px;width:0.9px;background:#DA70D6"></div>
<div class="mm" style="left:730.4px;top:19.42px;width:5.4px;background:#C586C0"></div>
<div class="mm" style="left:736.7px;top:19.42px;width:2.7px;background:#569CD6"></div>
<div class="mm" style="left:740.3px;top:19.42px;width:7.2px;background:#4EC9B0"></div>
<div class="mm" style="left:730.4px;top:21.24px;width:0.9px;background:#179FFF"></div>
<div class="mm" style="left:734px;top:23.06px;width:7.2px;background:#9CDCFE"></div>
<div class="mm" style="left:742.1px;top:23.06px;width:0.9px;background:#CCCCCC"></div>
<div class="mm" style="left:743.9px;top:23.06px;width:0.9px;background:#9CDCFE"></div>
<div class="mm" style="left:744.8px;top:23.06px;width:0.9px;background:#CCCCCC"></div>
<div class="mm" style="left:745.7px;top:23.06px;width:7.2px;background:#9CDCFE"></div>
<div class="mm" style="left:752.9px;top:23.06px;width:0.9px;background:#CCCCCC"></div>
<div class="mm" style="left:734px;top:24.88px;width:8.1px;background:#9CDCFE"></div>
<div class="mm" style="left:743px;top:24.88px;width:0.9px;background:#CCCCCC"></div>
<div class="mm" style="left:744.8px;top:24.88px;width:0.9px;background:#9CDCFE"></div>
<div class="mm" style="left:745.7px;top:24.88px;width:0.9px;background:#CCCCCC"></div>
<div class="mm" style="left:746.6px;top:24.88px;width:8.1px;background:#9CDCFE"></div>
<div class="mm" style="left:754.7px;top:24.88px;width:0.9px;background:#CCCCCC"></div>
<div class="mm" style="left:730.4px;top:26.7px;width:0.9px;background:#179FFF"></div>
<div class="mm" style="left:731.3px;top:26.7px;width:0.9px;background:#CCCCCC"></div>
<div class="mm" style="left:726.8px;top:28.52px;width:0.9px;background:#DA70D6"></div>
<div class="mm" style="left:727.7px;top:28.52px;width:0.9px;background:#FFD700"></div>
<div class="mm" style="left:723.2px;top:30.34px;width:0.9px;background:#179FFF"></div>
<div class="mm" style="left:724.1px;top:30.34px;width:0.9px;background:#CCCCCC"></div>
<div class="mm" style="left:719.6px;top:32.16px;width:0.9px;background:#DA70D6"></div>
<div class="mm" style="left:716px;top:33.98px;width:0.9px;background:#FFD700"></div>
</div>
<div class="abs" style="left:817px;top:362px;width:783px;height:30px;background:#181818;"></div>
<div class="abs" style="left:817px;top:362px;width:108px;height:30px;background:#1f1f1f;border-right:1px solid #2b2b2b"></div>
<div class="csic" style="left:824.1px;top:370.5px">C</div><svg class="abs" style="left:831.1px;top:373.9px" width="6" height="7" viewBox="0 0 6 7"><path d="M1.9 0.3L1.4 6.7M4.3 0.3L3.8 6.7M0.3 2.3H5.5M0.1 4.6H5.3" stroke="#5A93C2" stroke-width="0.85"/></svg>
<div class="tabtxt" style="left:844.5px;top:362.7px;color:#9D9D9D">Program.cs</div>
<svg class="abs" style="left:908px;top:374px" width="9" height="8" viewBox="0 0 9 8"><path d="M0.6 0.4L8.2 7.4M8.2 0.4L0.6 7.4" stroke="#8C8C8C" stroke-width="1.05"/></svg>
<div class="abs" style="left:817px;top:392px;width:783px;height:20px;background:#1f1f1f"></div>
<div class="csic" style="left:829.1px;top:394.5px">C</div><svg class="abs" style="left:836.1px;top:397.9px" width="6" height="7" viewBox="0 0 6 7"><path d="M1.9 0.3L1.4 6.7M4.3 0.3L3.8 6.7M0.3 2.3H5.5M0.1 4.6H5.3" stroke="#5A93C2" stroke-width="0.85"/></svg><div class="bct" style="left:849px;top:391.5px;color:#C3C3C3;font-size:11px">Program.cs</div><svg class="abs" style="left:909px;top:396.5px" width="6" height="10" viewBox="0 0 6 10"><path d="M1 1.2L4.6 5L1 8.8" fill="none" stroke="#B0B0B0" stroke-width="1.1"/></svg><div class="abs" style="left:919.5px;top:403.5px;width:1.5px;height:1.5px;background:#B8B8B8"></div><div class="abs" style="left:922.5px;top:403.5px;width:1.5px;height:1.5px;background:#B8B8B8"></div><div class="abs" style="left:925.5px;top:403.5px;width:1.5px;height:1.5px;background:#B8B8B8"></div>

<div style="position:absolute;left:817px;top:410.5px;width:707px;height:427.5px;overflow:hidden">
<div class="cur" style="left:59px;top:296.8px;width:648px"></div>
<div class="ig" style="left:59px;top:130px"></div>
<div class="ig" style="left:59px;top:146.68px"></div>
<div class="ig" style="left:59px;top:163.36px"></div>
<div class="ig" style="left:59px;top:180.04px"></div>
<div class="ig" style="left:59px;top:196.72px"></div>
<div class="ig" style="left:59px;top:213.4px"></div>
<div class="ig" style="left:59px;top:230.08px"></div>
<div class="ig" style="left:59px;top:246.76px"></div>
<div class="ig" style="left:59px;top:263.44px"></div>
<div class="ig" style="left:59px;top:280.12px"></div>
<div class="ig" style="left:59px;top:296.8px"></div>
<div class="ig" style="left:59px;top:313.48px"></div>
<div class="ig" style="left:86.09px;top:263.44px"></div>
<div class="ig" style="left:59px;top:396.88px"></div>

<div class="ln" style="left:-4px;top:-86.84px;color:#858585">1</div>
<div class="code" style="left:59px;top:-86.84px"><span style="color:#569CD6">using</span> <span style="color:#4EC9B0">System</span>.<span style="color:#4EC9B0">Reflection</span>;</div>
<div class="ln" style="left:-4px;top:-70.16px;color:#858585">2</div>
<div class="code" style="left:59px;top:-70.16px"><span style="color:#569CD6">using</span> <span style="color:#4EC9B0">System</span>.<span style="color:#4EC9B0">Security</span>.<span style="color:#4EC9B0">Claims</span>;</div>
<div class="ln" style="left:-4px;top:-53.48px;color:#858585">3</div>
<div class="code" style="left:59px;top:-53.48px"><span style="color:#569CD6">using</span> <span style="color:#4EC9B0">AutoMapper</span>;</div>
<div class="ln" style="left:-4px;top:-36.8px;color:#858585">4</div>
<div class="code" style="left:59px;top:-36.8px"></div>
<div class="ln" style="left:-4px;top:-20.12px;color:#858585">5</div>
<div class="code" style="left:59px;top:-20.12px"></div>
<div class="ln" style="left:-4px;top:-3.44px;color:#858585">6</div>
<div class="code" style="left:59px;top:-3.44px"><span style="color:#569CD6">var</span> <span style="color:#9CDCFE">builder</span> = <span style="color:#4EC9B0">WebApplication</span>.<span style="color:#DCDCAA">CreateBuilder</span><span style="color:#FFD700">(</span><span style="color:#9CDCFE">args</span><span style="color:#FFD700">)</span>;</div>
<div class="ln" style="left:-4px;top:13.24px;color:#858585">7</div>
<div class="code" style="left:59px;top:13.24px"></div>
<div class="ln" style="left:-4px;top:29.92px;color:#858585">8</div>
<div class="code" style="left:59px;top:29.92px"><span style="color:#9CDCFE">builder</span>.<span style="color:#9CDCFE">Services</span>.<span style="color:#DCDCAA">AddAutoMapper</span><span style="color:#FFD700">(</span><span style="color:#4EC9B0">Assembly</span>.<span style="color:#DCDCAA">GetExecutingAssembly</span><span style="color:#DA70D6">(</span><span style="color:#DA70D6">)</span><span style="color:#FFD700">)</span>;</div>
<div class="ln" style="left:-4px;top:46.6px;color:#858585">9</div>
<div class="code" style="left:59px;top:46.6px"></div>
<div class="ln" style="left:-4px;top:63.28px;color:#858585">10</div>
<div class="code" style="left:59px;top:63.28px"><span style="color:#569CD6">var</span> <span style="color:#9CDCFE">app</span> = <span style="color:#9CDCFE">builder</span>.<span style="color:#DCDCAA">Build</span><span style="color:#FFD700">(</span><span style="color:#FFD700">)</span>;</div>
<div class="ln" style="left:-4px;top:79.96px;color:#858585">11</div>
<div class="code" style="left:59px;top:79.96px"></div>
<div class="ln" style="left:-4px;top:96.64px;color:#858585">12</div>
<div class="code" style="left:59px;top:96.64px"><span style="color:#9CDCFE">app</span>.<span style="color:#DCDCAA">MapPost</span><span style="color:#FFD700">(</span><span style="color:#CE9178">&quot;/map&quot;</span>, <span style="color:#569CD6">async</span> <span style="color:#DA70D6">(</span><span style="color:#179FFF">[</span><span style="color:#4EC9B0">FromBody</span><span style="color:#179FFF">]</span> <span style="color:#4EC9B0">OrderRequest</span> <span style="color:#9CDCFE">orderRequest</span>, <span style="color:#4EC9B0">ClaimsPrincipal</span> <span style="color:#9CDCFE">principal</span>, <span style="color:#179FFF">[</span><span style="color:#4EC9B0">FromServices</span><span style="color:#179FFF">]</span> <span style="color:#4EC9B0">IMapper</span> <span style="color:#9CDCFE">mapper</span><span style="color:#DA70D6">)</span> =&gt;</div>
<div class="ln" style="left:-4px;top:113.32px;color:#858585">13</div>
<div class="code" style="left:59px;top:113.32px"><span style="color:#DA70D6">{</span></div>
<div class="ln" style="left:-4px;top:130px;color:#858585">14</div>
<div class="code" style="left:59px;top:130px">    <span style="color:#569CD6">var</span> <span style="color:#9CDCFE">result</span> = <span style="color:#9CDCFE">mapper</span>.<span style="color:#DCDCAA">Map</span>&lt;<span style="color:#4EC9B0">Order</span>&gt;<span style="color:#179FFF">(</span><span style="color:#9CDCFE">orderRequest</span><span style="color:#179FFF">)</span>;</div>
<div class="ln" style="left:-4px;top:146.68px;color:#858585">15</div>
<div class="code" style="left:59px;top:146.68px"></div>
<div class="ln" style="left:-4px;top:163.36px;color:#858585">16</div>
<div class="code" style="left:59px;top:163.36px">    <span style="color:#569CD6">var</span> <span style="color:#9CDCFE">userId</span> = <span style="color:#9CDCFE">principal</span>?.<span style="color:#DCDCAA">FindFirstValue</span><span style="color:#179FFF">(</span><span style="color:#CE9178">&quot;sub&quot;</span><span style="color:#179FFF">)</span> ?? <span style="color:#CE9178">&quot;&quot;</span>;</div>
<div class="ln" style="left:-4px;top:180.04px;color:#858585">17</div>
<div class="code" style="left:59px;top:180.04px">    <span style="color:#569CD6">var</span> <span style="color:#9CDCFE">delivery</span> = <span style="color:#C586C0">await</span> <span style="color:#DCDCAA">GetDelivery</span><span style="color:#179FFF">(</span><span style="color:#9CDCFE">userId</span><span style="color:#179FFF">)</span>;</div>
<div class="ln" style="left:-4px;top:196.72px;color:#858585">18</div>
<div class="code" style="left:59px;top:196.72px"></div>
<div class="ln" style="left:-4px;top:213.4px;color:#858585">19</div>
<div class="code" style="left:59px;top:213.4px">    <span style="color:#9CDCFE">result</span>.<span style="color:#9CDCFE">UserId</span> = <span style="color:#9CDCFE">userId</span>;</div>
<div class="ln" style="left:-4px;top:230.08px;color:#858585">20</div>
<div class="code" style="left:59px;top:230.08px">    <span style="color:#C586C0">foreach</span><span style="color:#179FFF">(</span><span style="color:#569CD6">var</span> <span style="color:#9CDCFE">item</span> <span style="color:#C586C0">in</span> <span style="color:#9CDCFE">result</span>.<span style="color:#9CDCFE">Items</span><span style="color:#179FFF">)</span></div>
<div class="ln" style="left:-4px;top:246.76px;color:#858585">21</div>
<div class="code" style="left:59px;top:246.76px">    <span style="color:#179FFF">{</span></div>
<div class="ln" style="left:-4px;top:263.44px;color:#858585">22</div>
<div class="code" style="left:59px;top:263.44px">        <span style="color:#9CDCFE">item</span>.<span style="color:#9CDCFE">Delivery</span> = <span style="color:#9CDCFE">delivery</span>;</div>
<div class="ln" style="left:-4px;top:280.12px;color:#858585">23</div>
<div class="code" style="left:59px;top:280.12px">    <span style="color:#179FFF">}</span></div>
<div class="ln" style="left:-4px;top:296.8px;color:#CCCCCC">24</div>
<div class="code" style="left:59px;top:296.8px"></div>
<div class="ln" style="left:-4px;top:313.48px;color:#858585">25</div>
<div class="code" style="left:59px;top:313.48px">    <span style="color:#C586C0">return</span> <span style="color:#4EC9B0">Results</span>.<span style="color:#DCDCAA">Ok</span><span style="color:#179FFF">(</span><span style="color:#9CDCFE">result</span><span style="color:#179FFF">)</span>;</div>
<div class="ln" style="left:-4px;top:330.16px;color:#858585">26</div>
<div class="code" style="left:59px;top:330.16px"><span style="color:#DA70D6">}</span><span style="color:#FFD700">)</span>;</div>
<div class="ln" style="left:-4px;top:346.84px;color:#858585">27</div>
<div class="code" style="left:59px;top:346.84px"></div>
<div class="ln" style="left:-4px;top:363.52px;color:#858585">28</div>
<div class="code" style="left:59px;top:363.52px"><span style="color:#4EC9B0">Task</span>&lt;<span style="color:#4EC9B0">Delivery</span>&gt; <span style="color:#DCDCAA">GetDelivery</span><span style="color:#FFD700">(</span><span style="color:#569CD6">string</span> <span style="color:#9CDCFE">userId</span><span style="color:#FFD700">)</span></div>
<div class="ln" style="left:-4px;top:380.2px;color:#858585">29</div>
<div class="code" style="left:59px;top:380.2px"><span style="color:#FFD700">{</span></div>
<div class="ln" style="left:-4px;top:396.88px;color:#858585">30</div>
<div class="code" style="left:59px;top:396.88px">    <span style="color:#C586C0">return</span> <span style="color:#4EC9B0">Task</span>.<span style="color:#DCDCAA">FromResult</span><span style="color:#DA70D6">(</span><span style="color:#4EC9B0">Delivery</span>.<span style="color:#4FC1FF">Premium</span><span style="color:#DA70D6">)</span>;</div>
<div class="ln" style="left:-4px;top:413.56px;color:#858585">31</div>
<div class="code" style="left:59px;top:413.56px"><span style="color:#FFD700">}</span></div>
<div class="ln" style="left:-4px;top:430.24px;color:#858585">32</div>
<div class="code" style="left:59px;top:430.24px"></div>
<div class="ln" style="left:-4px;top:446.92px;color:#858585">33</div>
<div class="code" style="left:59px;top:446.92px"></div>
<div class="ln" style="left:-4px;top:463.6px;color:#858585">34</div>
<div class="code" style="left:59px;top:463.6px"><span style="color:#9CDCFE">app</span>.<span style="color:#9CDCFE">Run</span><span style="color:#FFD700">(</span><span style="color:#FFD700">)</span>;</div>
<div class="ln" style="left:-4px;top:480.28px;color:#858585">35</div>
<div class="code" style="left:59px;top:480.28px"></div>
<div class="ln" style="left:-4px;top:496.96px;color:#858585">36</div>
<div class="code" style="left:59px;top:496.96px"></div>
<div class="ln" style="left:-4px;top:513.64px;color:#858585">37</div>
<div class="code" style="left:59px;top:513.64px"><span style="color:#569CD6">public</span> <span style="color:#9CDCFE">enum</span> <span style="color:#4EC9B0">Delivery</span></div>
<div class="ln" style="left:-4px;top:530.32px;color:#858585">38</div>
<div class="code" style="left:59px;top:530.32px"><span style="color:#FFD700">{</span></div>
<div class="ln" style="left:-4px;top:547px;color:#858585">39</div>
<div class="code" style="left:59px;top:547px">    <span style="color:#9CDCFE">Standard</span>,</div>
<div class="ln" style="left:-4px;top:563.68px;color:#858585">40</div>
<div class="code" style="left:59px;top:563.68px">    <span style="color:#9CDCFE">Premium</span></div>
<div class="ln" style="left:-4px;top:580.36px;color:#858585">41</div>
<div class="code" style="left:59px;top:580.36px"><span style="color:#FFD700">}</span></div>
<svg class="abs" style="left:160.59px;top:377.92px" width="9" height="2"><rect x="0.6" y="0" width="1.4" height="1.4" fill="#B0B0B0"/><rect x="3.4" y="0" width="1.4" height="1.4" fill="#B0B0B0"/><rect x="6.2" y="0" width="1.4" height="1.4" fill="#B0B0B0"/></svg>
</div>
<div class="abs" style="left:817px;top:410.5px;width:783px;height:4px;background:linear-gradient(rgba(0,0,0,0.45),rgba(0,0,0,0))"></div>
<div class="abs" style="left:1531px;top:411.7px;width:69px;height:426px;overflow:hidden">
<div class="mm" style="left:0px;top:0px;width:4.5px;background:#569CD6"></div>
<div class="mm" style="left:5.4px;top:0px;width:5.4px;background:#4EC9B0"></div>
<div class="mm" style="left:10.8px;top:0px;width:0.9px;background:#CCCCCC"></div>
<div class="mm" style="left:11.7px;top:0px;width:9px;background:#4EC9B0"></div>
<div class="mm" style="left:20.7px;top:0px;width:0.9px;background:#CCCCCC"></div>
<div class="mm" style="left:0px;top:1.8px;width:4.5px;background:#569CD6"></div>
<div class="mm" style="left:5.4px;top:1.8px;width:5.4px;background:#4EC9B0"></div>
<div class="mm" style="left:10.8px;top:1.8px;width:0.9px;background:#CCCCCC"></div>
<div class="mm" style="left:11.7px;top:1.8px;width:7.2px;background:#4EC9B0"></div>
<div class="mm" style="left:18.9px;top:1.8px;width:0.9px;background:#CCCCCC"></div>
<div class="mm" style="left:19.8px;top:1.8px;width:5.4px;background:#4EC9B0"></div>
<div class="mm" style="left:25.2px;top:1.8px;width:0.9px;background:#CCCCCC"></div>
<div class="mm" style="left:0px;top:3.6px;width:4.5px;background:#569CD6"></div>
<div class="mm" style="left:5.4px;top:3.6px;width:9px;background:#4EC9B0"></div>
<div class="mm" style="left:14.4px;top:3.6px;width:0.9px;background:#CCCCCC"></div>
<div class="mm" style="left:0px;top:9px;width:2.7px;background:#569CD6"></div>
<div class="mm" style="left:3.6px;top:9px;width:6.3px;background:#9CDCFE"></div>
<div class="mm" style="left:10.8px;top:9px;width:0.9px;background:#CCCCCC"></div>
<div class="mm" style="left:12.6px;top:9px;width:12.6px;background:#4EC9B0"></div>
<div class="mm" style="left:25.2px;top:9px;width:0.9px;background:#CCCCCC"></div>
<div class="mm" style="left:26.1px;top:9px;width:11.7px;background:#DCDCAA"></div>
<div class="mm" style="left:37.8px;top:9px;width:0.9px;background:#FFD700"></div>
<div class="mm" style="left:38.7px;top:9px;width:3.6px;background:#9CDCFE"></div>
<div class="mm" style="left:42.3px;top:9px;width:0.9px;background:#FFD700"></div>
<div class="mm" style="left:43.2px;top:9px;width:0.9px;background:#CCCCCC"></div>
<div class="mm" style="left:0px;top:12.6px;width:6.3px;background:#9CDCFE"></div>
<div class="mm" style="left:6.3px;top:12.6px;width:0.9px;background:#CCCCCC"></div>
<div class="mm" style="left:7.2px;top:12.6px;width:7.2px;background:#9CDCFE"></div>
<div class="mm" style="left:14.4px;top:12.6px;width:0.9px;background:#CCCCCC"></div>
<div class="mm" style="left:15.3px;top:12.6px;width:11.7px;background:#DCDCAA"></div>
<div class="mm" style="left:27px;top:12.6px;width:0.9px;background:#FFD700"></div>
<div class="mm" style="left:27.9px;top:12.6px;width:7.2px;background:#4EC9B0"></div>
<div class="mm" style="left:35.1px;top:12.6px;width:0.9px;background:#CCCCCC"></div>
<div class="mm" style="left:36px;top:12.6px;width:18px;background:#DCDCAA"></div>
<div class="mm" style="left:54px;top:12.6px;width:0.9px;background:#DA70D6"></div>
<div class="mm" style="left:54.9px;top:12.6px;width:0.9px;background:#DA70D6"></div>
<div class="mm" style="left:55.8px;top:12.6px;width:0.9px;background:#FFD700"></div>
<div class="mm" style="left:56.7px;top:12.6px;width:0.9px;background:#CCCCCC"></div>
<div class="mm" style="left:0px;top:16.2px;width:2.7px;background:#569CD6"></div>
<div class="mm" style="left:3.6px;top:16.2px;width:2.7px;background:#9CDCFE"></div>
<div class="mm" style="left:7.2px;top:16.2px;width:0.9px;background:#CCCCCC"></div>
<div class="mm" style="left:9px;top:16.2px;width:6.3px;background:#9CDCFE"></div>
<div class="mm" style="left:15.3px;top:16.2px;width:0.9px;background:#CCCCCC"></div>
<div class="mm" style="left:16.2px;top:16.2px;width:4.5px;background:#DCDCAA"></div>
<div class="mm" style="left:20.7px;top:16.2px;width:0.9px;background:#FFD700"></div>
<div class="mm" style="left:21.6px;top:16.2px;width:0.9px;background:#FFD700"></div>
<div class="mm" style="left:22.5px;top:16.2px;width:0.9px;background:#CCCCCC"></div>
<div class="mm" style="left:0px;top:19.8px;width:2.7px;background:#9CDCFE"></div>
<div class="mm" style="left:2.7px;top:19.8px;width:0.9px;background:#CCCCCC"></div>
<div class="mm" style="left:3.6px;top:19.8px;width:6.3px;background:#DCDCAA"></div>
<div class="mm" style="left:9.9px;top:19.8px;width:0.9px;background:#FFD700"></div>
<div class="mm" style="left:10.8px;top:19.8px;width:5.4px;background:#CE9178"></div>
<div class="mm" style="left:16.2px;top:19.8px;width:0.9px;background:#CCCCCC"></div>
<div class="mm" style="left:18px;top:19.8px;width:4.5px;background:#569CD6"></div>
<div class="mm" style="left:23.4px;top:19.8px;width:0.9px;background:#DA70D6"></div>
<div class="mm" style="left:24.3px;top:19.8px;width:0.9px;background:#179FFF"></div>
<div class="mm" style="left:25.2px;top:19.8px;width:7.2px;background:#4EC9B0"></div>
<div class="mm" style="left:32.4px;top:19.8px;width:0.9px;background:#179FFF"></div>
<div class="mm" style="left:34.2px;top:19.8px;width:10.8px;background:#4EC9B0"></div>
<div class="mm" style="left:45.9px;top:19.8px;width:10.8px;background:#9CDCFE"></div>
<div class="mm" style="left:56.7px;top:19.8px;width:0.9px;background:#CCCCCC"></div>
<div class="mm" style="left:58.5px;top:19.8px;width:13.5px;background:#4EC9B0"></div>
<div class="mm" style="left:72.9px;top:19.8px;width:8.1px;background:#9CDCFE"></div>
<div class="mm" style="left:81px;top:19.8px;width:0.9px;background:#CCCCCC"></div>
<div class="mm" style="left:82.8px;top:19.8px;width:0.9px;background:#179FFF"></div>
<div class="mm" style="left:83.7px;top:19.8px;width:10.8px;background:#4EC9B0"></div>
<div class="mm" style="left:94.5px;top:19.8px;width:0.9px;background:#179FFF"></div>
<div class="mm" style="left:96.3px;top:19.8px;width:6.3px;background:#4EC9B0"></div>
<div class="mm" style="left:103.5px;top:19.8px;width:5.4px;background:#9CDCFE"></div>
<div class="mm" style="left:108.9px;top:19.8px;width:0.9px;background:#DA70D6"></div>
<div class="mm" style="left:110.7px;top:19.8px;width:1.8px;background:#CCCCCC"></div>
<div class="mm" style="left:0px;top:21.6px;width:0.9px;background:#DA70D6"></div>
<div class="mm" style="left:3.6px;top:23.4px;width:2.7px;background:#569CD6"></div>
<div class="mm" style="left:7.2px;top:23.4px;width:5.4px;background:#9CDCFE"></div>
<div class="mm" style="left:13.5px;top:23.4px;width:0.9px;background:#CCCCCC"></div>
<div class="mm" style="left:15.3px;top:23.4px;width:5.4px;background:#9CDCFE"></div>
<div class="mm" style="left:20.7px;top:23.4px;width:0.9px;background:#CCCCCC"></div>
<div class="mm" style="left:21.6px;top:23.4px;width:2.7px;background:#DCDCAA"></div>
<div class="mm" style="left:24.3px;top:23.4px;width:0.9px;background:#CCCCCC"></div>
<div class="mm" style="left:25.2px;top:23.4px;width:4.5px;background:#4EC9B0"></div>
<div class="mm" style="left:29.7px;top:23.4px;width:0.9px;background:#CCCCCC"></div>
<div class="mm" style="left:30.6px;top:23.4px;width:0.9px;background:#179FFF"></div>
<div class="mm" style="left:31.5px;top:23.4px;width:10.8px;background:#9CDCFE"></div>
<div class="mm" style="left:42.3px;top:23.4px;width:0.9px;background:#179FFF"></div>
<div class="mm" style="left:43.2px;top:23.4px;width:0.9px;background:#CCCCCC"></div>
<div class="mm" style="left:3.6px;top:27px;width:2.7px;background:#569CD6"></div>
<div class="mm" style="left:7.2px;top:27px;width:5.4px;background:#9CDCFE"></div>
<div class="mm" style="left:13.5px;top:27px;width:0.9px;background:#CCCCCC"></div>
<div class="mm" style="left:15.3px;top:27px;width:8.1px;background:#9CDCFE"></div>
<div class="mm" style="left:23.4px;top:27px;width:1.8px;background:#CCCCCC"></div>
<div class="mm" style="left:25.2px;top:27px;width:12.6px;background:#DCDCAA"></div>
<div class="mm" style="left:37.8px;top:27px;width:0.9px;background:#179FFF"></div>
<div class="mm" style="left:38.7px;top:27px;width:4.5px;background:#CE9178"></div>
<div class="mm" style="left:43.2px;top:27px;width:0.9px;background:#179FFF"></div>
<div class="mm" style="left:45px;top:27px;width:1.8px;background:#CCCCCC"></div>
<div class="mm" style="left:47.7px;top:27px;width:1.8px;background:#CE9178"></div>
<div class="mm" style="left:49.5px;top:27px;width:0.9px;background:#CCCCCC"></div>
<div class="mm" style="left:3.6px;top:28.8px;width:2.7px;background:#569CD6"></div>
<div class="mm" style="left:7.2px;top:28.8px;width:7.2px;background:#9CDCFE"></div>
<div class="mm" style="left:15.3px;top:28.8px;width:0.9px;background:#CCCCCC"></div>
<div class="mm" style="left:17.1px;top:28.8px;width:4.5px;background:#C586C0"></div>
<div class="mm" style="left:22.5px;top:28.8px;width:9.9px;background:#DCDCAA"></div>
<div class="mm" style="left:32.4px;top:28.8px;width:0.9px;background:#179FFF"></div>
<div class="mm" style="left:33.3px;top:28.8px;width:5.4px;background:#9CDCFE"></div>
<div class="mm" style="left:38.7px;top:28.8px;width:0.9px;background:#179FFF"></div>
<div class="mm" style="left:39.6px;top:28.8px;width:0.9px;background:#CCCCCC"></div>
<div class="mm" style="left:3.6px;top:32.4px;width:5.4px;background:#9CDCFE"></div>
<div class="mm" style="left:9px;top:32.4px;width:0.9px;background:#CCCCCC"></div>
<div class="mm" style="left:9.9px;top:32.4px;width:5.4px;background:#9CDCFE"></div>
<div class="mm" style="left:16.2px;top:32.4px;width:0.9px;background:#CCCCCC"></div>
<div class="mm" style="left:18px;top:32.4px;width:5.4px;background:#9CDCFE"></div>
<div class="mm" style="left:23.4px;top:32.4px;width:0.9px;background:#CCCCCC"></div>
<div class="mm" style="left:3.6px;top:34.2px;width:6.3px;background:#C586C0"></div>
<div class="mm" style="left:9.9px;top:34.2px;width:0.9px;background:#179FFF"></div>
<div class="mm" style="left:10.8px;top:34.2px;width:2.7px;background:#569CD6"></div>
<div class="mm" style="left:14.4px;top:34.2px;width:3.6px;background:#9CDCFE"></div>
<div class="mm" style="left:18.9px;top:34.2px;width:1.8px;background:#C586C0"></div>
<div class="mm" style="left:21.6px;top:34.2px;width:5.4px;background:#9CDCFE"></div>
<div class="mm" style="left:27px;top:34.2px;width:0.9px;background:#CCCCCC"></div>
<div class="mm" style="left:27.9px;top:34.2px;width:4.5px;background:#9CDCFE"></div>
<div class="mm" style="left:32.4px;top:34.2px;width:0.9px;background:#179FFF"></div>
<div class="mm" style="left:3.6px;top:36px;width:0.9px;background:#179FFF"></div>
<div class="mm" style="left:7.2px;top:37.8px;width:3.6px;background:#9CDCFE"></div>
<div class="mm" style="left:10.8px;top:37.8px;width:0.9px;background:#CCCCCC"></div>
<div class="mm" style="left:11.7px;top:37.8px;width:7.2px;background:#9CDCFE"></div>
<div class="mm" style="left:19.8px;top:37.8px;width:0.9px;background:#CCCCCC"></div>
<div class="mm" style="left:21.6px;top:37.8px;width:7.2px;background:#9CDCFE"></div>
<div class="mm" style="left:28.8px;top:37.8px;width:0.9px;background:#CCCCCC"></div>
<div class="mm" style="left:3.6px;top:39.6px;width:0.9px;background:#179FFF"></div>
<div class="mm" style="left:3.6px;top:43.2px;width:5.4px;background:#C586C0"></div>
<div class="mm" style="left:9.9px;top:43.2px;width:6.3px;background:#4EC9B0"></div>
<div class="mm" style="left:16.2px;top:43.2px;width:0.9px;background:#CCCCCC"></div>
<div class="mm" style="left:17.1px;top:43.2px;width:1.8px;background:#DCDCAA"></div>
<div class="mm" style="left:18.9px;top:43.2px;width:0.9px;background:#179FFF"></div>
<div class="mm" style="left:19.8px;top:43.2px;width:5.4px;background:#9CDCFE"></div>
<div class="mm" style="left:25.2px;top:43.2px;width:0.9px;background:#179FFF"></div>
<div class="mm" style="left:26.1px;top:43.2px;width:0.9px;background:#CCCCCC"></div>
<div class="mm" style="left:0px;top:45px;width:0.9px;background:#DA70D6"></div>
<div class="mm" style="left:0.9px;top:45px;width:0.9px;background:#FFD700"></div>
<div class="mm" style="left:1.8px;top:45px;width:0.9px;background:#CCCCCC"></div>
<div class="mm" style="left:0px;top:48.6px;width:3.6px;background:#4EC9B0"></div>
<div class="mm" style="left:3.6px;top:48.6px;width:0.9px;background:#CCCCCC"></div>
<div class="mm" style="left:4.5px;top:48.6px;width:7.2px;background:#4EC9B0"></div>
<div class="mm" style="left:11.7px;top:48.6px;width:0.9px;background:#CCCCCC"></div>
<div class="mm" style="left:13.5px;top:48.6px;width:9.9px;background:#DCDCAA"></div>
<div class="mm" style="left:23.4px;top:48.6px;width:0.9px;background:#FFD700"></div>
<div class="mm" style="left:24.3px;top:48.6px;width:5.4px;background:#569CD6"></div>
<div class="mm" style="left:30.6px;top:48.6px;width:5.4px;background:#9CDCFE"></div>
<div class="mm" style="left:36px;top:48.6px;width:0.9px;background:#FFD700"></div>
<div class="mm" style="left:0px;top:50.4px;width:0.9px;background:#FFD700"></div>
<div class="mm" style="left:3.6px;top:52.2px;width:5.4px;background:#C586C0"></div>
<div class="mm" style="left:9.9px;top:52.2px;width:3.6px;background:#4EC9B0"></div>
<div class="mm" style="left:13.5px;top:52.2px;width:0.9px;background:#CCCCCC"></div>
<div class="mm" style="left:14.4px;top:52.2px;width:9px;background:#DCDCAA"></div>
<div class="mm" style="left:23.4px;top:52.2px;width:0.9px;background:#DA70D6"></div>
<div class="mm" style="left:24.3px;top:52.2px;width:7.2px;background:#4EC9B0"></div>
<div class="mm" style="left:31.5px;top:52.2px;width:0.9px;background:#CCCCCC"></div>
<div class="mm" style="left:32.4px;top:52.2px;width:6.3px;background:#4FC1FF"></div>
<div class="mm" style="left:38.7px;top:52.2px;width:0.9px;background:#DA70D6"></div>
<div class="mm" style="left:39.6px;top:52.2px;width:0.9px;background:#CCCCCC"></div>
<div class="mm" style="left:0px;top:54px;width:0.9px;background:#FFD700"></div>
<div class="mm" style="left:0px;top:59.4px;width:2.7px;background:#9CDCFE"></div>
<div class="mm" style="left:2.7px;top:59.4px;width:0.9px;background:#CCCCCC"></div>
<div class="mm" style="left:3.6px;top:59.4px;width:2.7px;background:#9CDCFE"></div>
<div class="mm" style="left:6.3px;top:59.4px;width:0.9px;background:#FFD700"></div>
<div class="mm" style="left:7.2px;top:59.4px;width:0.9px;background:#FFD700"></div>
<div class="mm" style="left:8.1px;top:59.4px;width:0.9px;background:#CCCCCC"></div>
<div class="mm" style="left:0px;top:64.8px;width:5.4px;background:#569CD6"></div>
<div class="mm" style="left:6.3px;top:64.8px;width:3.6px;background:#9CDCFE"></div>
<div class="mm" style="left:10.8px;top:64.8px;width:7.2px;background:#4EC9B0"></div>
<div class="mm" style="left:0px;top:66.6px;width:0.9px;background:#FFD700"></div>
<div class="mm" style="left:3.6px;top:68.4px;width:7.2px;background:#9CDCFE"></div>
<div class="mm" style="left:10.8px;top:68.4px;width:0.9px;background:#CCCCCC"></div>
<div class="mm" style="left:3.6px;top:70.2px;width:6.3px;background:#9CDCFE"></div>
<div class="mm" style="left:0px;top:72px;width:0.9px;background:#FFD700"></div>
</div>
<div class="abs" style="left:804px;top:50px;width:1px;height:311px;background:#161616"></div>
<div class="abs" style="left:804px;top:50px;width:12px;height:1px;background:#141414"></div>
<div class="abs" style="left:804px;top:411px;width:12px;height:1px;background:#141414"></div>
<div class="abs" style="left:804px;top:411.7px;width:1px;height:427px;background:#161616"></div>
<div class="abs" style="left:804.5px;top:188.8px;width:11.5px;height:1.8px;background:#9A9A9A"></div>
<div class="abs" style="left:804.5px;top:491.2px;width:11.5px;height:1.8px;background:#9A9A9A"></div>
<div class="abs" style="left:812px;top:83px;width:4px;height:9px;background:#CCA700"></div>
<div class="abs" style="left:716px;top:53.6px;width:88px;height:1.8px;background:#CCA700;opacity:0.6"></div>
<div class="abs" style="left:1531px;top:55.2px;width:69px;height:3.8px;background:#CCA700;opacity:0.45"></div>
</body></html>
